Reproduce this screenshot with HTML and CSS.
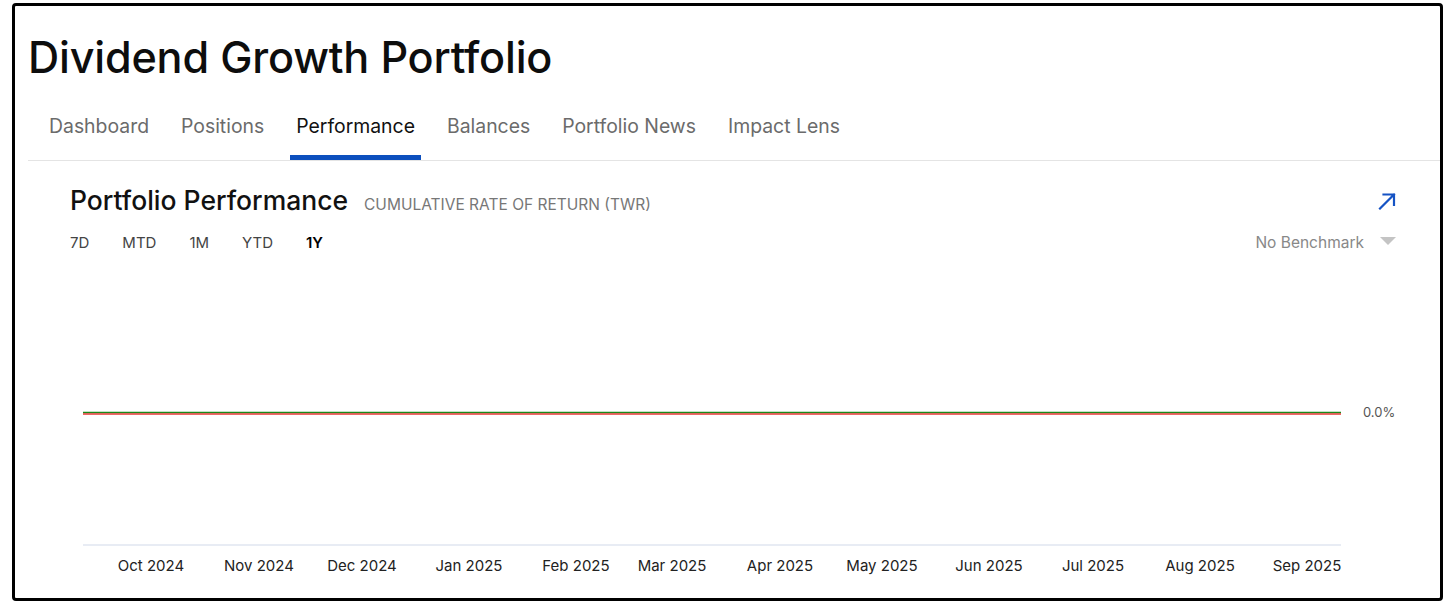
FILE: index.html
```html
<!DOCTYPE html>
<html lang="en">
<head>
<meta charset="utf-8">
<title>Dividend Growth Portfolio</title>
<link rel="stylesheet" href="styles.css">
</head>
<body>
<div class="frame">
  <h1 class="title">Dividend Growth Portfolio</h1>
  <nav class="tabs">
    <a class="tab">Dashboard</a>
    <a class="tab">Positions</a>
    <a class="tab active">Performance</a>
    <a class="tab">Balances</a>
    <a class="tab">Portfolio News</a>
    <a class="tab">Impact Lens</a>
  </nav>
  <section class="panel">
    <div class="panel-head">
      <div class="heading">
        <h2 class="panel-title">Portfolio Performance</h2>
        <span class="panel-sub">Cumulative Rate of Return (TWR)</span>
      </div>
      <svg class="expand" width="18" height="18" viewBox="0 0 18 18" aria-label="Expand">
        <path d="M2 16.5 L16 2.5 M5.5 2.5 H16 V13" fill="none" stroke="#1553c4" stroke-width="2.2" stroke-linecap="square"/>
      </svg>
    </div>
    <div class="controls">
      <div class="ranges">
        <button class="range">7D</button>
        <button class="range">MTD</button>
        <button class="range">1M</button>
        <button class="range">YTD</button>
        <button class="range selected">1Y</button>
      </div>
      <div class="bench">
        <span>No Benchmark</span>
        <span class="caret"></span>
      </div>
    </div>
    <svg class="chart" width="1326" height="320" viewBox="0 0 1326 320">
      <line x1="13" y1="147.5" x2="1271" y2="147.5" stroke="#1a8a1a" stroke-width="1.6"/>
      <line x1="13" y1="149" x2="1271" y2="149" stroke="#e53935" stroke-width="1.4"/>
      <text class="ylabel" x="1293" y="152">0.0%</text>
      <line x1="13" y1="280" x2="1271" y2="280" stroke="#e8ecf4" stroke-width="2"/>
      <g class="xlabels">
        <text x="81" y="306">Oct 2024</text>
        <text x="189" y="306">Nov 2024</text>
        <text x="292" y="306">Dec 2024</text>
        <text x="399" y="306">Jan 2025</text>
        <text x="506" y="306">Feb 2025</text>
        <text x="602" y="306">Mar 2025</text>
        <text x="710" y="306">Apr 2025</text>
        <text x="812" y="306">May 2025</text>
        <text x="919" y="306">Jun 2025</text>
        <text x="1023" y="306">Jul 2025</text>
        <text x="1130" y="306">Aug 2025</text>
        <text x="1237" y="306">Sep 2025</text>
      </g>
    </svg>
  </section>
</div>
</body>
</html>
```
FILE: styles.css
```css
* { box-sizing: border-box; }
html, body { margin: 0; padding: 0; background: #fff; }
body {
  font-family: Inter, "Liberation Sans", Arial, sans-serif;
  color: #111;
}
.frame {
  width: 1431px;
  height: 598px;
  margin: 3px 0 0 12px;
  border: 3px solid #000;
  border-radius: 4px;
  overflow: hidden;
}
.title {
  margin: 0;
  padding: 26px 0 0 13px;
  font-size: 43.2px;
  line-height: 50px;
  font-weight: 500;
  letter-spacing: -0.2px;
  color: #0d0d0d;
}
.tabs {
  display: flex;
  gap: 20px;
  margin: 24px 0 0 13px;
  padding-left: 15px;
  border-bottom: 1px solid #e4e4e4;
}
.tab {
  display: block;
  padding: 7px 6px 0;
  font-size: 19.4px;
  line-height: 26px;
  height: 54px;
  color: #6b6b6b;
  border-bottom: 5px solid transparent;
}
.tab.active {
  color: #111;
  border-bottom-color: #0c4fbe;
}
.panel {
  padding: 0 44px 0 55px;
}
.panel-head {
  display: flex;
  justify-content: space-between;
  align-items: center;
  margin-top: 24px;
  height: 30px;
}
.heading {
  display: flex;
  align-items: baseline;
  gap: 16px;
}
.panel-title {
  margin: 0;
  font-size: 26.5px;
  font-weight: 500;
  color: #111;
}
.panel-sub {
  font-size: 15.5px;
  text-transform: uppercase;
  color: #777;
}
.expand { display: block; margin-top: 2px; }
.controls {
  display: flex;
  justify-content: space-between;
  align-items: center;
  margin-top: 15px;
  height: 24px;
}
.ranges { display: flex; gap: 33px; }
.range {
  border: 0;
  background: none;
  padding: 0;
  font-family: inherit;
  font-size: 15px;
  color: #444;
}
.range.selected { color: #000; font-weight: 600; }
.bench {
  display: flex;
  align-items: center;
  gap: 16px;
  font-size: 15.5px;
  color: #888;
}
.caret {
  width: 0;
  height: 0;
  border-left: 8px solid transparent;
  border-right: 8px solid transparent;
  border-top: 8px solid #c4c4c4;
  margin-top: -3px;
}
.chart {
  display: block;
  margin-top: 11px;
  font-family: Inter, "Liberation Sans", Arial, sans-serif;
}
.ylabel { font-size: 13px; fill: #555; }
.xlabels text { font-size: 15px; fill: #222; text-anchor: middle; }
```
